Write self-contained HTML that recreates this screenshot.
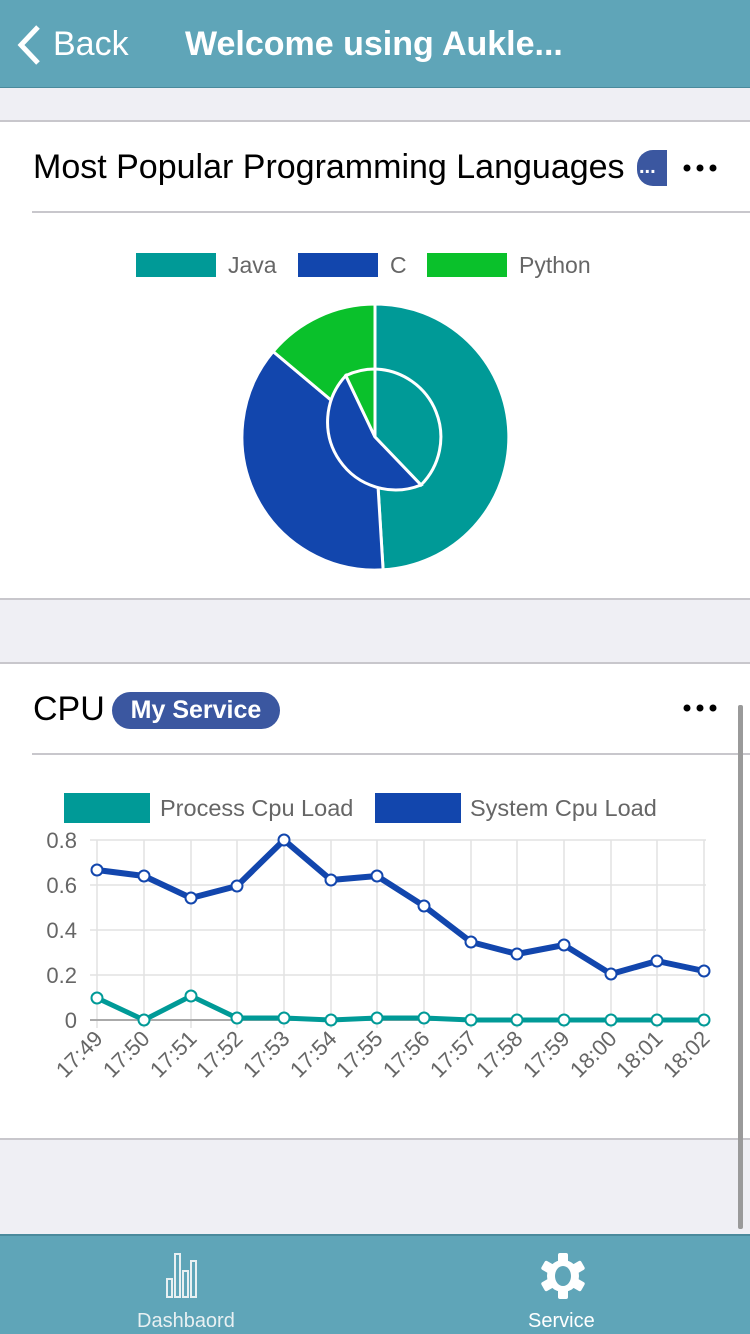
<!DOCTYPE html>
<html><head><meta charset="utf-8"><style>
*{margin:0;padding:0;box-sizing:border-box}
body{width:750px;height:1334px;background:#efeff4;font-family:"Liberation Sans",sans-serif;position:relative;overflow:hidden}
.hdr{position:absolute;top:0;left:0;width:750px;height:88px;background:#5fa5b8;border-bottom:1px solid #4a8a9c;color:#fff}
.card{position:absolute;left:0;width:750px;background:#fff;border-top:2px solid #c8c7cc;border-bottom:2px solid #c8c7cc}
.ttl{position:absolute;left:33px;font-size:34px;color:#000;white-space:nowrap}
.dots{position:absolute;left:682px}
.sep{position:absolute;left:32px;right:0;height:2px;background:#c8c7cc}
.tab{position:absolute;top:1234px;left:0;width:750px;height:100px;background:#5fa5b8;border-top:2px solid #4a8a9c}
</style></head><body>
<div class="hdr">
<svg style="position:absolute;left:14px;top:24px" width="30" height="42"><path d="M24 3 L7 21 L24 39" stroke="#fff" stroke-width="5" fill="none"/></svg>
<div style="position:absolute;left:53px;top:25px;font-size:34px">Back</div>
<div style="position:absolute;left:185px;top:25px;font-size:34px;font-weight:bold;white-space:nowrap">Welcome using Aukle...</div>
</div>

<div class="card" style="top:120px;height:480px">
<div class="ttl" style="top:26px">Most Popular Programming Languages</div>
<div style="position:absolute;left:637px;top:28px;width:30px;height:36px;background:#3b57a0;border-radius:16px 0 0 16px;color:#fff;font-size:20px;font-weight:bold;padding:6px 0 0 2px">...</div>
<svg class="dots" style="top:40px" width="40" height="12"><circle cx="5" cy="6" r="3.5"/><circle cx="18" cy="6" r="3.5"/><circle cx="31" cy="6" r="3.5"/></svg>
<div class="sep" style="top:89px"></div>
<svg style="position:absolute;left:0;top:-2px" width="750" height="480">
<g font-size="23" fill="#666">
<rect x="136" y="133" width="80" height="24" fill="#009a97"/><text x="228" y="153">Java</text>
<rect x="298" y="133" width="80" height="24" fill="#1246ad"/><text x="390" y="153">C</text>
<rect x="427" y="133" width="80" height="24" fill="#0ac12b"/><text x="519" y="153">Python</text>
</g>
<g transform="translate(0,-120)" stroke="#fff" stroke-width="3">
<path d="M375 437 L375 304 A133 133 0 0 1 383.1 569.8 Z" fill="#009a97"/>
<path d="M375 437 L383.1 569.8 A133 133 0 0 1 273.1 351.5 Z" fill="#1246ad"/>
<path d="M375 437 L273.1 351.5 A133 133 0 0 1 375 304 Z" fill="#0ac12b"/>
<path d="M375 437 L375 369 A68 68 0 0 1 421 485 Z" fill="#009a97"/>
<path d="M375 437 L421 485 A68 68 0 0 1 345.8 375.6 Z" fill="#1246ad"/>
<path d="M375 437 L345.8 375.6 A68 68 0 0 1 375 369 Z" fill="#0ac12b"/>
</g>
</svg>
</div>

<div class="card" style="top:662px;height:478px">
<div class="ttl" style="top:26px">CPU</div>
<div style="position:absolute;left:112px;top:28px;width:168px;height:37px;background:#3b57a0;border-radius:19px;color:#fff;font-size:25px;font-weight:bold;text-align:center;line-height:37px">My Service</div>
<svg class="dots" style="top:38px" width="40" height="12"><circle cx="5" cy="6" r="3.5"/><circle cx="18" cy="6" r="3.5"/><circle cx="31" cy="6" r="3.5"/></svg>
<div class="sep" style="top:89px"></div>
</div>

<svg style="position:absolute;left:0;top:0" width="750" height="1140">
<g font-size="23.5" fill="#666">
<rect x="64" y="793" width="86" height="30" fill="#009a97"/><text x="160" y="816">Process Cpu Load</text>
<rect x="375" y="793" width="86" height="30" fill="#1246ad"/><text x="470" y="816">System Cpu Load</text>
</g>
<g stroke="#e2e2e2" stroke-width="1.5">
<line x1="90" y1="840" x2="706" y2="840"/><line x1="90" y1="885" x2="706" y2="885"/><line x1="90" y1="930" x2="706" y2="930"/><line x1="90" y1="975" x2="706" y2="975"/>
<line x1="97" y1="840" x2="97" y2="1028"/><line x1="144" y1="840" x2="144" y2="1028"/><line x1="191" y1="840" x2="191" y2="1028"/><line x1="237" y1="840" x2="237" y2="1028"/><line x1="284" y1="840" x2="284" y2="1028"/><line x1="331" y1="840" x2="331" y2="1028"/><line x1="377" y1="840" x2="377" y2="1028"/><line x1="424" y1="840" x2="424" y2="1028"/><line x1="471" y1="840" x2="471" y2="1028"/><line x1="517" y1="840" x2="517" y2="1028"/><line x1="564" y1="840" x2="564" y2="1028"/><line x1="611" y1="840" x2="611" y2="1028"/><line x1="657" y1="840" x2="657" y2="1028"/><line x1="704" y1="840" x2="704" y2="1028"/>
</g>
<line x1="90" y1="1020" x2="706" y2="1020" stroke="#aaa" stroke-width="2"/>
<g font-size="22" fill="#666" text-anchor="end">
<text x="77" y="848">0.8</text><text x="77" y="893">0.6</text><text x="77" y="938">0.4</text><text x="77" y="983">0.2</text><text x="77" y="1028">0</text>
</g>
<polyline fill="none" stroke="#009a97" stroke-width="5" stroke-linejoin="round" points="97,998 144,1020 191,996 237,1018 284,1018 331,1020 377,1018 424,1018 471,1020 517,1020 564,1020 611,1020 657,1020 704,1020"/>
<polyline fill="none" stroke="#1246ad" stroke-width="6" stroke-linejoin="round" points="97,870 144,876 191,898 237,886 284,840 331,880 377,876 424,906 471,942 517,954 564,945 611,974 657,961 704,971"/>
<g fill="#fff" stroke="#009a97" stroke-width="2">
<circle cx="97" cy="998" r="5.5"/><circle cx="144" cy="1020" r="5.5"/><circle cx="191" cy="996" r="5.5"/><circle cx="237" cy="1018" r="5.5"/><circle cx="284" cy="1018" r="5.5"/><circle cx="331" cy="1020" r="5.5"/><circle cx="377" cy="1018" r="5.5"/><circle cx="424" cy="1018" r="5.5"/><circle cx="471" cy="1020" r="5.5"/><circle cx="517" cy="1020" r="5.5"/><circle cx="564" cy="1020" r="5.5"/><circle cx="611" cy="1020" r="5.5"/><circle cx="657" cy="1020" r="5.5"/><circle cx="704" cy="1020" r="5.5"/>
</g>
<g fill="#fff" stroke="#1246ad" stroke-width="2">
<circle cx="97" cy="870" r="5.5"/><circle cx="144" cy="876" r="5.5"/><circle cx="191" cy="898" r="5.5"/><circle cx="237" cy="886" r="5.5"/><circle cx="284" cy="840" r="5.5"/><circle cx="331" cy="880" r="5.5"/><circle cx="377" cy="876" r="5.5"/><circle cx="424" cy="906" r="5.5"/><circle cx="471" cy="942" r="5.5"/><circle cx="517" cy="954" r="5.5"/><circle cx="564" cy="945" r="5.5"/><circle cx="611" cy="974" r="5.5"/><circle cx="657" cy="961" r="5.5"/><circle cx="704" cy="971" r="5.5"/>
</g>
<g font-size="22" fill="#666" text-anchor="end">
<text transform="translate(104,1040) rotate(-45)">17:49</text><text transform="translate(151,1040) rotate(-45)">17:50</text><text transform="translate(198,1040) rotate(-45)">17:51</text><text transform="translate(244,1040) rotate(-45)">17:52</text><text transform="translate(291,1040) rotate(-45)">17:53</text><text transform="translate(338,1040) rotate(-45)">17:54</text><text transform="translate(384,1040) rotate(-45)">17:55</text><text transform="translate(431,1040) rotate(-45)">17:56</text><text transform="translate(478,1040) rotate(-45)">17:57</text><text transform="translate(524,1040) rotate(-45)">17:58</text><text transform="translate(571,1040) rotate(-45)">17:59</text><text transform="translate(618,1040) rotate(-45)">18:00</text><text transform="translate(664,1040) rotate(-45)">18:01</text><text transform="translate(711,1040) rotate(-45)">18:02</text>
</g>
</svg>

<div style="position:absolute;left:738px;top:705px;width:5px;height:524px;background:#9a9a9a;border-radius:2px"></div>

<div class="tab">
<svg style="position:absolute;left:165px;top:16px" width="48" height="48" fill="none" stroke="#e8f0f2" stroke-width="2">
<rect x="2" y="27" width="5" height="18"/><rect x="10" y="2" width="5" height="43"/><rect x="18" y="19" width="5" height="26"/><rect x="26" y="9" width="5" height="36"/>
</svg>
<div style="position:absolute;left:137px;top:74px;font-size:20px;color:#e8f0f2">Dashbaord</div>
<svg style="position:absolute;left:538px;top:16px" width="50" height="48" viewBox="0 0 50 48">
<g fill="#fff"><circle cx="25" cy="24" r="16"/>
<g transform="translate(25,24)"><rect x="-5" y="-23" width="10" height="10" rx="2"/><rect x="-5" y="-23" width="10" height="10" rx="2" transform="rotate(60)"/><rect x="-5" y="-23" width="10" height="10" rx="2" transform="rotate(120)"/><rect x="-5" y="-23" width="10" height="10" rx="2" transform="rotate(180)"/><rect x="-5" y="-23" width="10" height="10" rx="2" transform="rotate(240)"/><rect x="-5" y="-23" width="10" height="10" rx="2" transform="rotate(300)"/></g></g>
<ellipse cx="25" cy="24" rx="8" ry="10" fill="#5fa5b8"/>
</svg>
<div style="position:absolute;left:528px;top:74px;font-size:20px;color:#fff">Service</div>
</div>
</body></html>
